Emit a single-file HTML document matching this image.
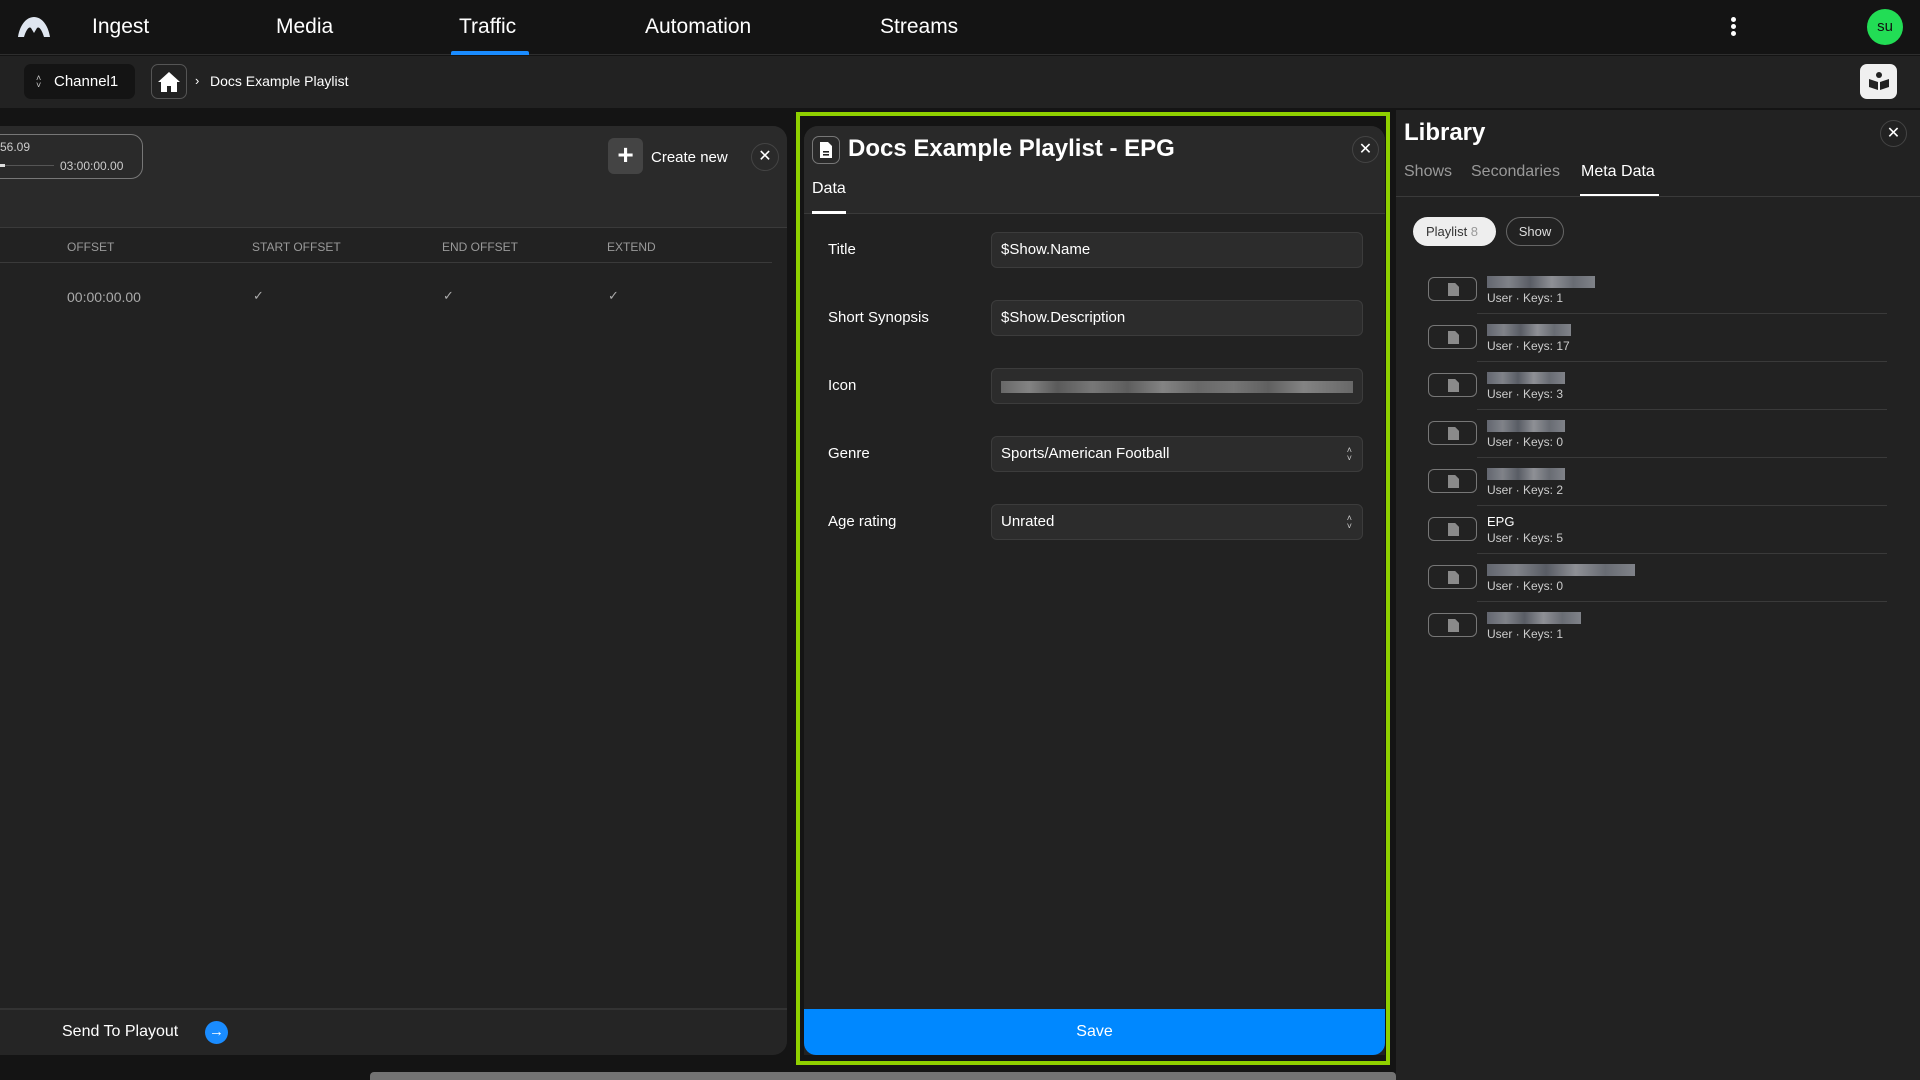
<!DOCTYPE html>
<html><head><meta charset="utf-8"><style>
*{box-sizing:border-box;margin:0;padding:0}
body{width:1920px;height:1080px;background:#141414;font-family:"Liberation Sans",sans-serif;color:#fff;position:relative;overflow:hidden}
.a{position:absolute}
.nav{font-size:21px;top:15px;color:#fff}
.circ{position:absolute;border:1px solid #444;border-radius:50%}
.lbl{position:absolute;left:828px;font-size:15px;color:#fff}
.inp{position:absolute;left:991px;width:372px;height:36px;background:#2c2c2c;border:1px solid #3c3c3c;border-radius:6px;font-size:15px;padding-left:9px;line-height:34px;color:#fff}
.hd{position:absolute;top:240px;font-size:12px;color:#9a9a9a}
.chk{position:absolute;top:288px;color:#aaa;font-size:13px}
.item{position:absolute;left:1428px;width:460px;height:48px}
.ib{position:absolute;left:0;top:0;width:49px;height:24px;border:1px solid #777;border-radius:6px}
.ib::after{content:"";position:absolute;left:19px;top:5px;width:11px;height:13px;background:#8a8a8a;clip-path:polygon(0 0,65% 0,100% 30%,100% 100%,0 100%)}
.nm{position:absolute;left:59px;top:-1px;height:12px;background:linear-gradient(90deg,#6a6e78 0,#8a8d94 20%,#5f636c 40%,#9a9ca2 60%,#70747c 80%,#8a8d94 100%);opacity:.9}
.sub{position:absolute;left:59px;top:14px;font-size:12px;color:#ccc}
.sep{position:absolute;left:49px;top:36px;width:410px;height:1px;background:#3a3a3a}
.sel{position:absolute;right:10px;top:9px;font-size:9px;color:#ccc;line-height:8px}
</style></head><body>
<!-- library bg -->
<div class="a" style="left:1396px;top:110px;width:524px;height:970px;background:#222"></div>
<!-- top nav -->
<div class="a" style="left:0;top:0;width:1920px;height:55px;background:#141414;border-bottom:1px solid #2e2e2e"></div>
<svg class="a" style="left:17px;top:16px" width="34" height="22" viewBox="0 0 34 22"><path d="M1 21 C3 8 10 1 17 1 C24 1 31 8 33 21 L27 21 C25 14 22 10 20 12 L17 17 L14 12 C12 10 9 14 7 21 Z" fill="#dfe6f0"/></svg>
<div class="a nav" style="left:92px">Ingest</div>
<div class="a nav" style="left:276px">Media</div>
<div class="a nav" style="left:459px">Traffic</div>
<div class="a nav" style="left:645px">Automation</div>
<div class="a nav" style="left:880px">Streams</div>
<div class="a" style="left:451px;top:51px;width:78px;height:4px;background:#1a8cff;border-radius:2px 2px 0 0"></div>
<div class="a" style="left:1731px;top:17px;width:5px;height:5px;border-radius:50%;background:#fff;box-shadow:0 7px 0 #fff,0 14px 0 #fff"></div>
<div class="a" style="left:1867px;top:9px;width:36px;height:36px;border-radius:50%;background:#22dd55;color:#111;font-size:15px;text-align:center;line-height:36px">su</div>
<!-- breadcrumb bar -->
<div class="a" style="left:0;top:56px;width:1920px;height:52px;background:#222"></div>
<div class="a" style="left:24px;top:64px;width:111px;height:35px;background:#141414;border-radius:7px;font-size:15px;line-height:35px;padding-left:30px">Channel1</div>
<div class="a" style="left:36px;top:75px;font-size:9px;color:#ccc;line-height:7px">˄<br>˅</div>
<div class="a" style="left:151px;top:64px;width:36px;height:35px;border:1px solid #555;border-radius:7px"></div>
<svg class="a" style="left:157px;top:71px" width="24" height="22" viewBox="0 0 24 22"><path d="M12 1 L23 11 L20 11 L20 21 L14 21 L14 15 L10 15 L10 21 L4 21 L4 11 L1 11 Z" fill="#fff"/></svg>
<div class="a" style="left:195px;top:73px;font-size:13px;color:#fff">›</div>
<div class="a" style="left:210px;top:73px;font-size:14px">Docs Example Playlist</div>
<div class="a" style="left:1860px;top:64px;width:37px;height:35px;background:#f0f0f0;border-radius:7px"></div>
<svg class="a" style="left:1867px;top:69px" width="24" height="24" viewBox="0 0 24 24"><circle cx="12" cy="6" r="3" fill="#222"/><path d="M2 10 L11 13 L11 21 L2 18 Z M22 10 L13 13 L13 21 L22 18 Z" fill="#222"/></svg>
<!-- left panel -->
<div class="a" style="left:0;top:126px;width:787px;height:929px;background:#222;border-radius:0 14px 14px 0;overflow:hidden">
 <div class="a" style="left:0;top:0;width:787px;height:102px;background:#2a2a2a;border-bottom:1px solid #3a3a3a"></div>
 <div class="a" style="left:-20px;top:8px;width:163px;height:45px;border:1px solid #777;border-radius:12px"></div>
 <div class="a" style="left:0;top:14px;font-size:12px;color:#ccc">56.09</div>
 <div class="a" style="left:0;top:39px;width:54px;height:1px;background:#555"></div>
 <div class="a" style="left:0;top:38px;width:5px;height:3px;background:#ddd"></div>
 <div class="a" style="left:60px;top:33px;font-size:12px;color:#ccc">03:00:00.00</div>
 <div class="a" style="left:608px;top:12px;width:35px;height:36px;background:#444;border-radius:6px;font-size:28px;text-align:center;line-height:34px;font-weight:bold">+</div>
 <div class="a" style="left:651px;top:23px;font-size:15px">Create new</div>
 <div class="circ" style="left:751px;top:17px;width:28px;height:28px;font-size:16px;text-align:center;line-height:25px;color:#fff">✕</div>
 <div class="a" style="left:0;top:136px;width:772px;height:1px;background:#3a3a3a"></div>
 <div class="a" style="left:0;top:882px;width:787px;height:2px;background:#333"></div>
 <div class="a" style="left:0;top:884px;width:787px;height:45px;background:#252525"></div>
 <div class="a" style="left:62px;top:897px;font-size:16px">Send To Playout</div>
 <div class="a" style="left:205px;top:895px;width:23px;height:23px;border-radius:50%;background:#1a8cff;color:#fff;font-size:15px;text-align:center;line-height:22px;font-weight:bold">→</div>
</div>
<div class="hd" style="left:67px">OFFSET</div>
<div class="hd" style="left:252px">START OFFSET</div>
<div class="hd" style="left:442px">END OFFSET</div>
<div class="hd" style="left:607px">EXTEND</div>
<div class="a" style="left:67px;top:289px;font-size:14px;color:#aaa">00:00:00.00</div>
<div class="chk" style="left:253px">✓</div>
<div class="chk" style="left:443px">✓</div>
<div class="chk" style="left:608px">✓</div>
<!-- dialog -->
<div class="a" style="left:796px;top:112px;width:594px;height:953px;border:4px solid #8fd000"></div>
<div class="a" style="left:804px;top:126px;width:581px;height:929px;background:#222;border-radius:14px 14px 0 0;overflow:hidden">
 <div class="a" style="left:0;top:0;width:581px;height:88px;background:#292929;border-bottom:1px solid #3a3a3a"></div>
</div>
<div class="a" style="left:812px;top:136px;width:28px;height:28px;border:1px solid #777;border-radius:7px"></div>
<svg class="a" style="left:818px;top:141px" width="16" height="18" viewBox="0 0 16 18"><path d="M2 1 L10 1 L14 5 L14 17 L2 17 Z" fill="#fff"/><rect x="5" y="10" width="6" height="1.6" fill="#222"/><rect x="5" y="13" width="6" height="1.6" fill="#222"/></svg>
<div class="a" style="left:848px;top:135px;font-size:24px;font-weight:bold">Docs Example Playlist - EPG</div>
<div class="circ" style="left:1352px;top:136px;width:27px;height:27px;font-size:16px;text-align:center;line-height:25px">✕</div>
<div class="a" style="left:812px;top:180px;font-size:16px">Data</div>
<div class="a" style="left:812px;top:211px;width:34px;height:3px;background:#fff"></div>
<div class="lbl" style="top:241px">Title</div>
<div class="inp" style="top:232px">$Show.Name</div>
<div class="lbl" style="top:309px">Short Synopsis</div>
<div class="inp" style="top:300px">$Show.Description</div>
<div class="lbl" style="top:377px">Icon</div>
<div class="inp" style="top:368px"><div class="a" style="left:9px;top:12px;width:352px;height:12px;background:linear-gradient(90deg,#777 0,#999 8%,#666 16%,#8a8a8a 26%,#6a6a6a 36%,#999 46%,#777 56%,#888 66%,#6d6d6d 76%,#999 86%,#777 100%);opacity:.8"></div></div>
<div class="lbl" style="top:445px">Genre</div>
<div class="inp" style="top:436px">Sports/American Football<div class="sel">˄<br>˅</div></div>
<div class="lbl" style="top:513px">Age rating</div>
<div class="inp" style="top:504px">Unrated<div class="sel">˄<br>˅</div></div>
<div class="a" style="left:804px;top:1009px;width:581px;height:46px;background:#0088ff;border-radius:0 0 12px 12px;font-size:16px;text-align:center;line-height:46px">Save</div>
<!-- library -->
<div class="a" style="left:1404px;top:119px;font-size:24px;font-weight:bold">Library</div>
<div class="circ" style="left:1880px;top:120px;width:27px;height:27px;font-size:16px;text-align:center;line-height:25px">✕</div>
<div class="a" style="left:1404px;top:163px;font-size:16px;color:#999">Shows</div>
<div class="a" style="left:1471px;top:163px;font-size:16px;color:#999">Secondaries</div>
<div class="a" style="left:1581px;top:163px;font-size:16px;color:#fff">Meta Data</div>
<div class="a" style="left:1396px;top:196px;width:524px;height:1px;background:#3a3a3a"></div>
<div class="a" style="left:1580px;top:194px;width:79px;height:2px;background:#fff"></div>
<div class="a" style="left:1413px;top:217px;width:83px;height:29px;background:#eee;border-radius:15px;color:#333;font-size:13px;line-height:29px;padding-left:13px">Playlist <span style="color:#999">8</span></div>
<div class="a" style="left:1506px;top:217px;width:58px;height:29px;border:1px solid #666;border-radius:15px;color:#ddd;font-size:13px;line-height:27px;text-align:center">Show</div>
<div class="item" style="top:277px"><div class="ib"></div><div class="nm" style="width:108px"></div><div class="sub">User · Keys: 1</div><div class="sep"></div></div>
<div class="item" style="top:325px"><div class="ib"></div><div class="nm" style="width:84px"></div><div class="sub">User · Keys: 17</div><div class="sep"></div></div>
<div class="item" style="top:373px"><div class="ib"></div><div class="nm" style="width:78px"></div><div class="sub">User · Keys: 3</div><div class="sep"></div></div>
<div class="item" style="top:421px"><div class="ib"></div><div class="nm" style="width:78px"></div><div class="sub">User · Keys: 0</div><div class="sep"></div></div>
<div class="item" style="top:469px"><div class="ib"></div><div class="nm" style="width:78px"></div><div class="sub">User · Keys: 2</div><div class="sep"></div></div>
<div class="item" style="top:517px"><div class="ib"></div><div class="a" style="left:59px;top:-3px;font-size:13px">EPG</div><div class="sub">User · Keys: 5</div><div class="sep"></div></div>
<div class="item" style="top:565px"><div class="ib"></div><div class="nm" style="width:148px"></div><div class="sub">User · Keys: 0</div><div class="sep"></div></div>
<div class="item" style="top:613px"><div class="ib"></div><div class="nm" style="width:94px"></div><div class="sub">User · Keys: 1</div></div>
<!-- scrollbar -->
<div class="a" style="left:370px;top:1072px;width:1026px;height:8px;background:#737373;border-radius:4px 4px 0 0"></div>
</body></html>
